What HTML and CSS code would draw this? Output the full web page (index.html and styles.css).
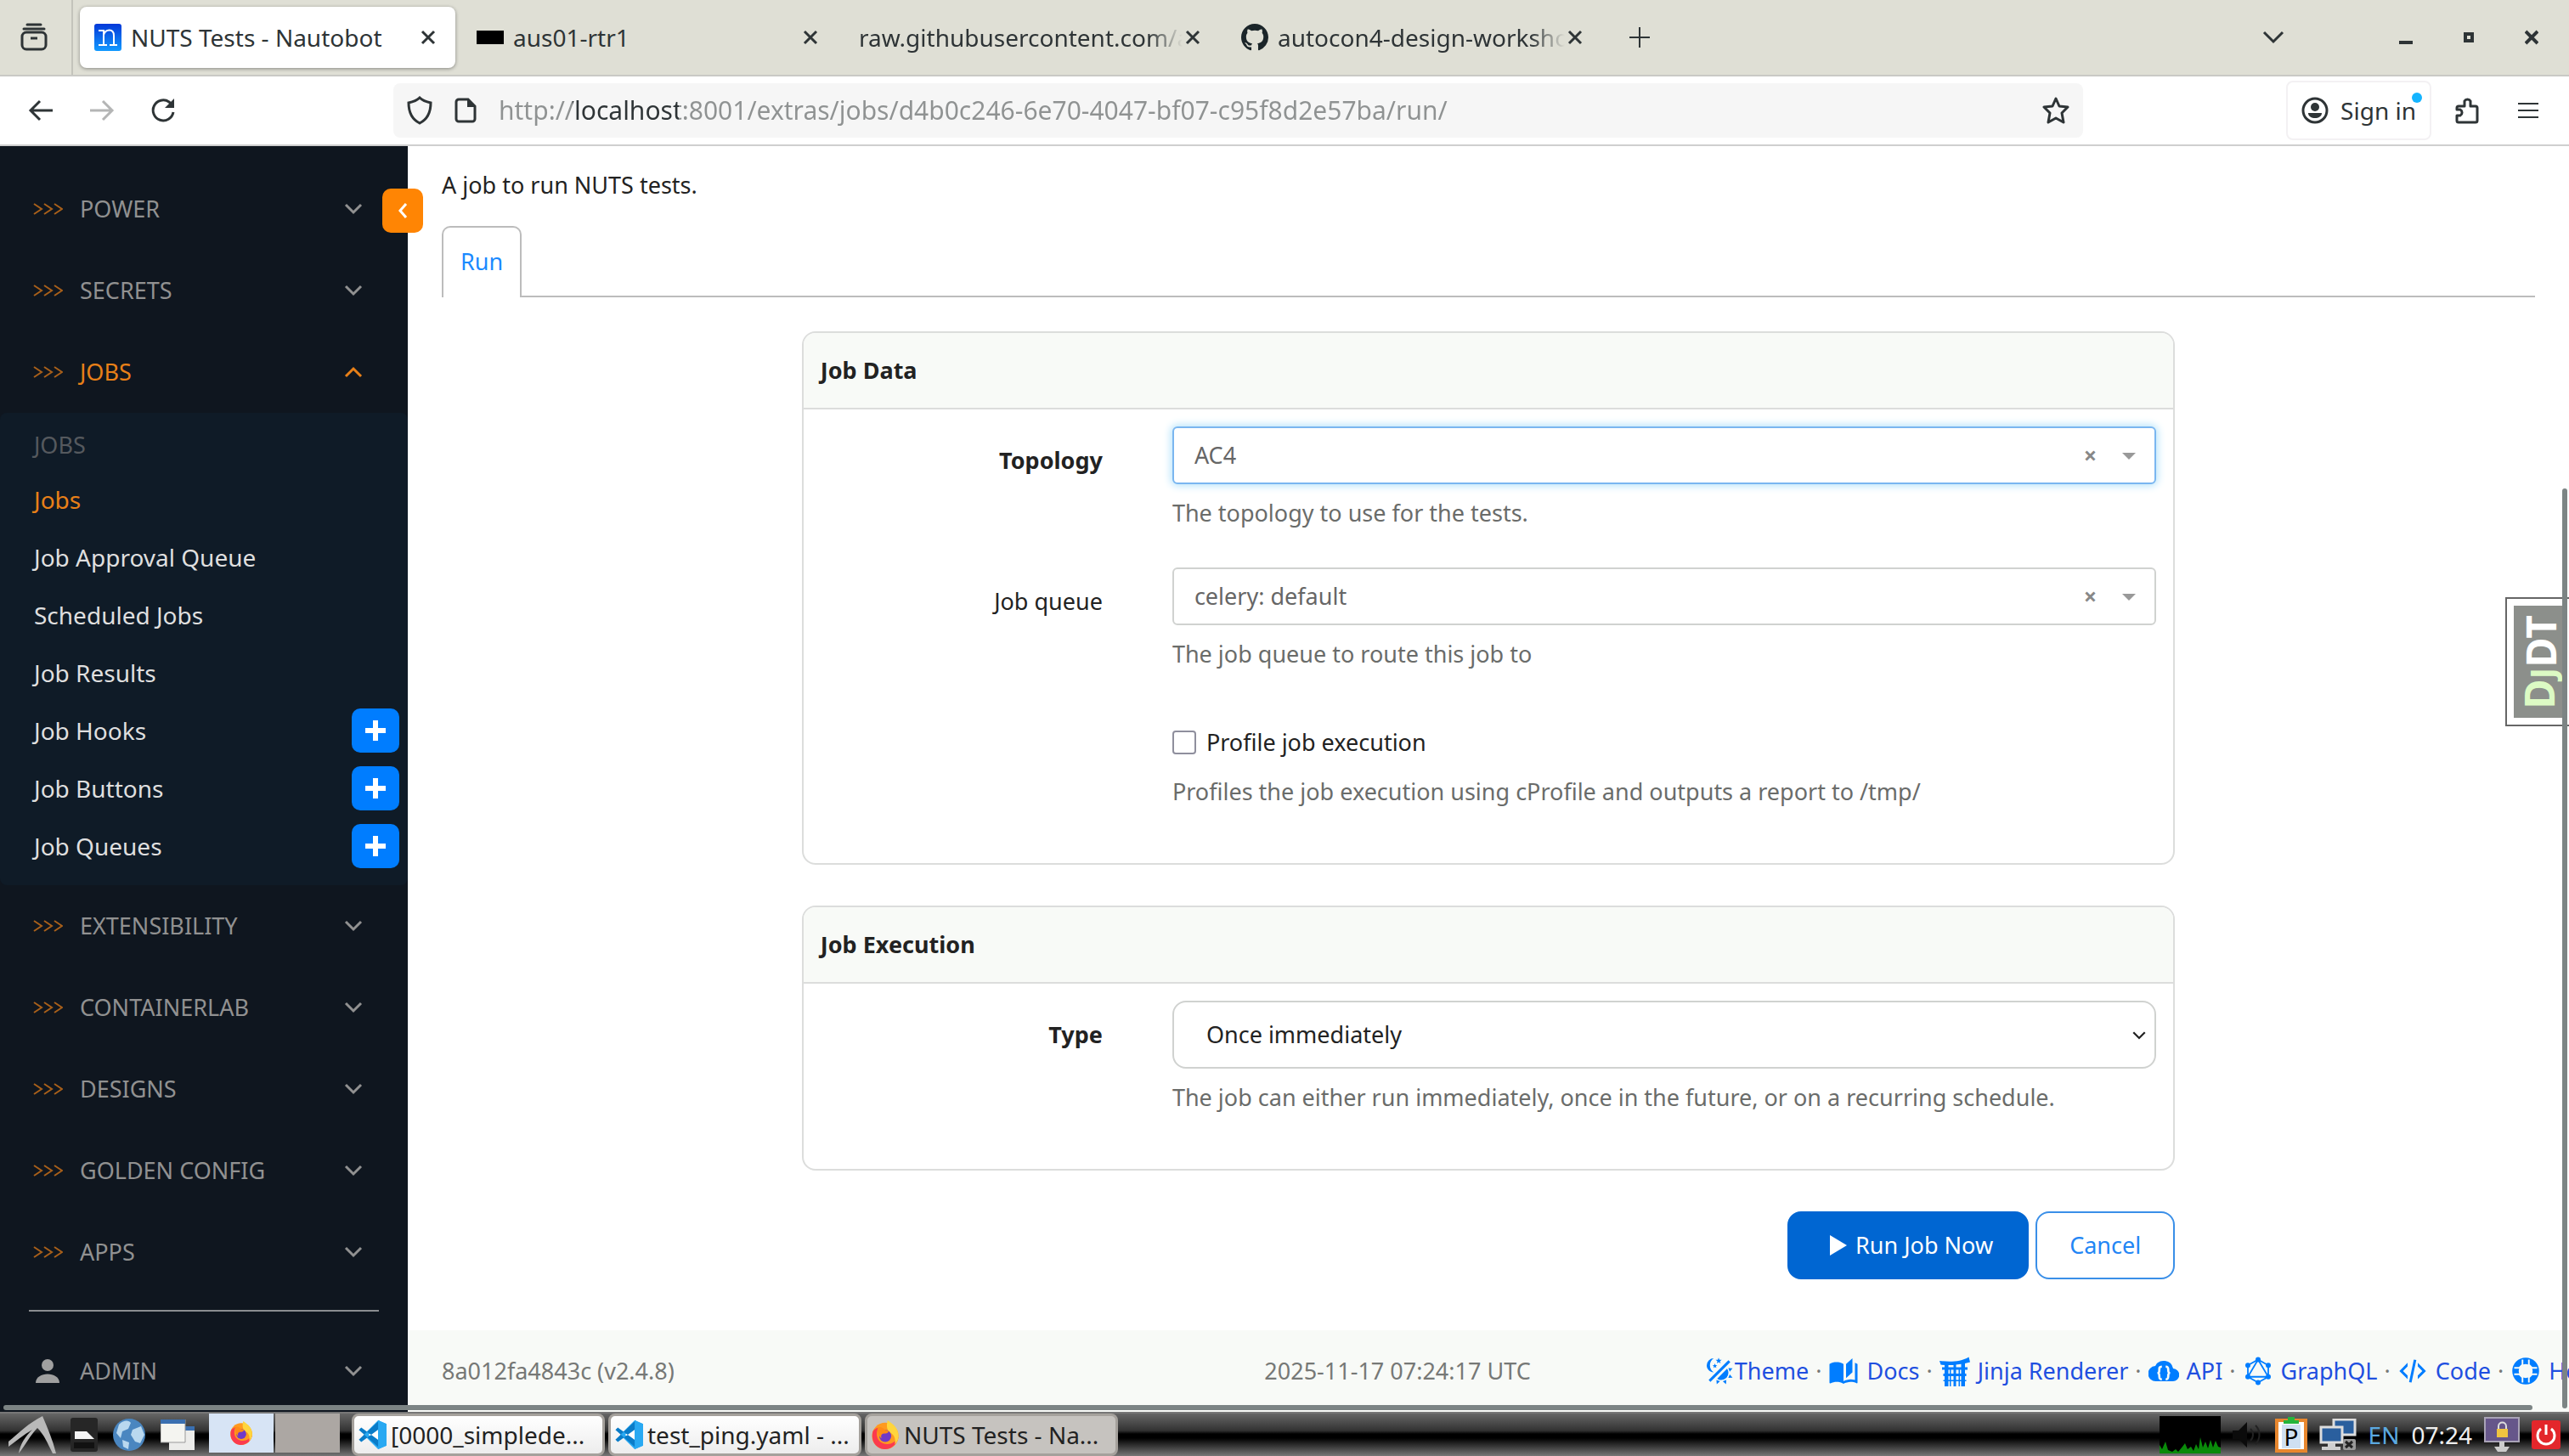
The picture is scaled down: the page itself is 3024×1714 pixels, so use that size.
FILE: index.html
```html
<!doctype html>
<html lang="en">
<head>
	<meta charset="utf-8">
	<title>NUTS Tests - Nautobot</title>
	<link rel="stylesheet" href="styles.css">
</head>

<body>
	<svg class="defs" aria-hidden="true">
		<symbol id="arrows" viewBox="0 0 36 16"><path d="M2 2l9 6-9 6M14 2l9 6-9 6M26 2l9 6-9 6" fill="none" stroke="currentColor" stroke-width="2"/></symbol>
		<symbol id="chev" viewBox="0 0 24 24"><path d="M3 7l9 9 9-9" fill="none" stroke="currentColor" stroke-width="3"/></symbol>
		<symbol id="close" viewBox="0 0 24 24"><path d="M5 5l14 14M19 5L5 19" fill="none" stroke="currentColor" stroke-width="3"/></symbol>
		<symbol id="plus" viewBox="0 0 24 24"><path d="M12 0v24M0 12h24" fill="none" stroke="currentColor" stroke-width="6"/></symbol>
		<symbol id="vscode" viewBox="0 0 24 24">
			<path d="M17 0L5 12l12 12 7-3V3z" fill="#29a9f2"/>
			<path d="M17 6v12l-8-6z" fill="#fff"/>
			<path d="M1 8l2-2 15 11v6zM1 16l2 2L18 7V0z" fill="#0a7cc8"/>
			<path d="M17 0l7 3v18l-7 3z" fill="#29a9f2"/>
		</symbol>
		<symbol id="firefox" viewBox="0 0 24 24">
			<circle cx="12" cy="13" r="11" fill="#ff9a1f"/>
			<path d="M1.500 10C0 20 7 24 12 24s10-4 11-10c-3 5-8 7-13 5S4 12 6 6C4 7 2 8 1.500 10z" fill="#fb3b4e"/>
			<path d="M14 0c4 3 9 6 9 13 0 3-1 5-3 7 1-6-1-8-4-10s-3-6-2-10z" fill="#ffd53d"/>
			<circle cx="12" cy="13" r="5" fill="#7139c8"/>
			<path d="M6 6c2-1 4 0 6 2l3 1c-1 2-3 2-4 2-2 0-3 2-2 4-2-1-4-5-3-9z" fill="#ff8b16"/>
		</symbol>
	</svg>

	<header class="browser">
		<div class="tabstrip">
			<button class="tool recent" aria-label="Recent browsing">
				<svg width="32" height="34" viewBox="0 0 32 34" fill="none" stroke="currentColor" stroke-width="3"><path d="M8 2h16M4 7h24" stroke-linecap="round"/><rect x="2" y="11" width="28" height="20" rx="5"/><path d="M12 18h8"/></svg>
			</button>
			<div class="tabs">
				<div class="tab active">
					<svg class="favicon" viewBox="0 0 32 32"><defs><linearGradient id="nb" x1="0" x2="0" y1="0" y2="1"><stop offset="0" stop-color="#0438d8"/><stop offset="1" stop-color="#129aff"/></linearGradient></defs><rect width="32" height="32" rx="3" fill="url(#nb)"/><path d="M5 8h6v16M5 25h10M11 13c2-7 12-8 12 1v11M18 25h9" fill="none" stroke="#fff" stroke-width="2"/></svg>
					<span class="tab-title">NUTS Tests - Nautobot</span>
					<button class="tab-close" aria-label="Close tab"><svg><use href="#close"/></svg></button>
				</div>
				<div class="tab">
					<svg class="favicon" viewBox="0 0 32 32"><rect y="8" width="32" height="16"/></svg>
					<span class="tab-title">aus01-rtr1</span>
					<button class="tab-close" aria-label="Close tab"><svg><use href="#close"/></svg></button>
				</div>
				<div class="tab">
					<span class="tab-title fade">raw.githubusercontent.com/a</span>
					<button class="tab-close" aria-label="Close tab"><svg><use href="#close"/></svg></button>
				</div>
				<div class="tab">
					<svg class="favicon" viewBox="0 0 16 16"><path fill="#1b2529" d="M8 0C3.580 0 0 3.580 0 8c0 3.540 2.290 6.530 5.470 7.590.4.070.55-.17.55-.38 0-.19-.01-.82-.01-1.490-2.010.37-2.530-.49-2.690-.94-.09-.23-.48-.94-.82-1.130-.28-.15-.68-.52-.01-.53.63-.01 1.080.58 1.230.82.72 1.210 1.870.87 2.330.66.07-.52.28-.87.51-1.070-1.780-.2-3.640-.89-3.640-3.950 0-.87.31-1.590.82-2.150-.08-.2-.36-1.020.08-2.120 0 0 .67-.21 2.200.82.64-.18 1.320-.27 2-.27s1.360.09 2 .27c1.530-1.040 2.200-.82 2.200-.82.44 1.100.16 1.920.08 2.120.51.56.82 1.270.82 2.150 0 3.070-1.870 3.750-3.650 3.950.29.25.54.73.54 1.480 0 1.070-.01 1.930-.01 2.200 0 .21.15.46.55.38A8.010 8.010 0 0016 8c0-4.420-3.580-8-8-8z"/></svg>
					<span class="tab-title fade">autocon4-design-worksho</span>
					<button class="tab-close" aria-label="Close tab"><svg><use href="#close"/></svg></button>
				</div>
			</div>
			<button class="tool" aria-label="New tab"><svg width="24" height="24" viewBox="0 0 24 24"><path d="M12 0v24M0 12h24" stroke="currentColor" stroke-width="2"/></svg></button>
			<div class="window-controls">
				<button class="tool list-tabs" aria-label="List all tabs"><svg width="26" height="24" viewBox="0 0 26 24"><path d="M2 6l11 11L24 6" fill="none" stroke="currentColor" stroke-width="3"/></svg></button>
				<button class="tool" aria-label="Minimize"><svg width="16" height="24" viewBox="0 0 16 24"><path d="M0 18h16" stroke="currentColor" stroke-width="4"/></svg></button>
				<button class="tool" aria-label="Maximize"><svg width="16" height="24" viewBox="0 0 16 24"><rect x="4" y="8" width="8" height="8" fill="none" stroke="currentColor" stroke-width="4"/></svg></button>
				<button class="tool" aria-label="Close window"><svg width="16" height="24" viewBox="0 0 16 24"><path d="M1 5l14 14M15 5L1 19" stroke="currentColor" stroke-width="4"/></svg></button>
			</div>
		</div>

		<div class="navbar">
			<button class="tool" aria-label="Back"><svg width="30" height="28" viewBox="0 0 30 28"><path d="M29 14H3M14 3L3 14l11 11" fill="none" stroke="currentColor" stroke-width="3"/></svg></button>
			<button class="tool" aria-label="Forward" disabled><svg width="30" height="28" viewBox="0 0 30 28"><path d="M1 14h26M16 3l11 11-11 11" fill="none" stroke="currentColor" stroke-width="3"/></svg></button>
			<button class="tool" aria-label="Reload"><svg width="30" height="30" viewBox="0 0 30 30"><path d="M27 17A12 12 0 1 1 22 5l5 5" fill="none" stroke="currentColor" stroke-width="3"/><path d="M28 1v11H17z" fill="currentColor"/></svg></button>
			<div class="urlbar">
				<svg width="30" height="34" viewBox="0 0 30 34"><path d="M15 2c4 4 8 5 13 6 0 11-3 19-13 24C5 27 2 19 2 8c5-1 9-2 13-6z" fill="none" stroke="currentColor" stroke-width="3"/></svg>
				<svg width="26" height="30" viewBox="0 0 26 30"><path d="M5 2h11l8 8v15a3 3 0 0 1-3 3H5a3 3 0 0 1-3-3V5a3 3 0 0 1 3-3z" fill="none" stroke="currentColor" stroke-width="3"/><path d="M15 1v10h10z" fill="currentColor"/></svg>
				<input class="url" type="text" aria-label="Address" value="http://localhost:8001/extras/jobs/d4b0c246-6e70-4047-bf07-c95f8d2e57ba/run/">
				<button class="tool" aria-label="Bookmark this page"><svg width="32" height="32" viewBox="0 0 32 32"><path d="M16 2l4 9 10 1-7 7 2 11-9-5-9 5 2-11-7-7 10-1z" fill="none" stroke="currentColor" stroke-width="3" stroke-linejoin="round"/></svg></button>
			</div>
			<button class="signin">
				<svg width="32" height="32" viewBox="0 0 32 32"><circle cx="16" cy="16" r="14" fill="none" stroke="currentColor" stroke-width="3"/><circle cx="16" cy="12" r="5" fill="currentColor"/><path d="M8 19h16c0 8-16 8-16 0z" fill="currentColor"/></svg>
				Sign in
				<span class="dot"></span>
			</button>
			<button class="tool" aria-label="Extensions"><svg width="28" height="34" viewBox="0 0 28 34"><path d="M2 14a2 2 0 0 1 2-2h7V6a4 4 0 0 1 7 0v6h6a2 2 0 0 1 2 2v15a2 2 0 0 1-2 2H4a2 2 0 0 1-2-2v-6h4a4 4 0 0 0 0-7H2z" fill="none" stroke="currentColor" stroke-width="3" stroke-linejoin="round"/></svg></button>
			<button class="tool" aria-label="Menu"><svg width="24" height="22" viewBox="0 0 24 22"><path d="M0 3h24M0 11h24M0 19h24" stroke="currentColor" stroke-width="2"/></svg></button>
		</div>
	</header>

	<div class="page">
		<nav class="sidebar">
			<button class="menu"><svg class="arrows"><use href="#arrows"/></svg>POWER<svg class="chev"><use href="#chev"/></svg></button>
			<button class="menu"><svg class="arrows"><use href="#arrows"/></svg>SECRETS<svg class="chev"><use href="#chev"/></svg></button>
			<button class="menu open"><svg class="arrows"><use href="#arrows"/></svg>JOBS<svg class="chev"><use href="#chev"/></svg></button>
			<div class="submenu">
				<div class="submenu-title">JOBS</div>
				<div class="submenu-item"><a class="current" href="#">Jobs</a></div>
				<div class="submenu-item"><a href="#">Job Approval Queue</a></div>
				<div class="submenu-item"><a href="#">Scheduled Jobs</a></div>
				<div class="submenu-item"><a href="#">Job Results</a></div>
				<div class="submenu-item"><a href="#">Job Hooks</a><button class="add" aria-label="Add job hook"><svg><use href="#plus"/></svg></button></div>
				<div class="submenu-item"><a href="#">Job Buttons</a><button class="add" aria-label="Add job button"><svg><use href="#plus"/></svg></button></div>
				<div class="submenu-item"><a href="#">Job Queues</a><button class="add" aria-label="Add job queue"><svg><use href="#plus"/></svg></button></div>
			</div>
			<button class="menu"><svg class="arrows"><use href="#arrows"/></svg>EXTENSIBILITY<svg class="chev"><use href="#chev"/></svg></button>
			<button class="menu"><svg class="arrows"><use href="#arrows"/></svg>CONTAINERLAB<svg class="chev"><use href="#chev"/></svg></button>
			<button class="menu"><svg class="arrows"><use href="#arrows"/></svg>DESIGNS<svg class="chev"><use href="#chev"/></svg></button>
			<button class="menu"><svg class="arrows"><use href="#arrows"/></svg>GOLDEN CONFIG<svg class="chev"><use href="#chev"/></svg></button>
			<button class="menu"><svg class="arrows"><use href="#arrows"/></svg>APPS<svg class="chev"><use href="#chev"/></svg></button>
			<hr>
			<button class="menu"><svg class="user" viewBox="0 0 36 28"><circle cx="18" cy="7" r="7" fill="currentColor"/><path d="M4 28c0-14 28-14 28 0z" fill="currentColor"/></svg>ADMIN<svg class="chev"><use href="#chev"/></svg></button>
		</nav>
		<button class="collapse" aria-label="Collapse sidebar"><svg width="12" height="20" viewBox="0 0 12 20"><path d="M10 2l-7 8 7 8" fill="none" stroke="#fff" stroke-width="3"/></svg></button>

		<div class="content">
			<main>
				<p class="description">A job to run NUTS tests.</p>
				<div class="page-tabs"><a href="#">Run</a></div>

				<form class="job-form">
					<section class="card">
						<h2>Job Data</h2>
						<div class="card-body">
							<label class="required" for="topology">Topology</label>
							<div class="field">
								<div class="select focus">
									<select id="topology"><option>AC4</option></select>
									<button type="button" class="clear" aria-label="Clear topology">×</button>
									<span class="caret"></span>
								</div>
								<p class="help">The topology to use for the tests.</p>
							</div>
							<label for="queue">Job queue</label>
							<div class="field">
								<div class="select">
									<select id="queue"><option>celery: default</option></select>
									<button type="button" class="clear" aria-label="Clear job queue">×</button>
									<span class="caret"></span>
								</div>
								<p class="help">The job queue to route this job to</p>
							</div>
							<div class="field check">
								<label for="profile"><input type="checkbox" id="profile">Profile job execution</label>
								<p class="help">Profiles the job execution using cProfile and outputs a report to /tmp/</p>
							</div>
						</div>
					</section>

					<section class="card">
						<h2>Job Execution</h2>
						<div class="card-body">
							<label class="required" for="type">Type</label>
							<div class="field">
								<div class="select native">
									<select id="type"><option>Once immediately</option></select>
									<svg class="select-chev"><use href="#chev"/></svg>
								</div>
								<p class="help">The job can either run immediately, once in the future, or on a recurring schedule.</p>
							</div>
						</div>
					</section>

					<div class="actions">
						<button type="button" class="btn primary"><svg width="20" height="24" viewBox="0 0 20 24"><path d="M0 0l20 12L0 24z" fill="#fff"/></svg>Run Job Now</button>
						<button type="button" class="btn">Cancel</button>
					</div>
				</form>
			</main>

			<footer>
				<span>8a012fa4843c (v2.4.8)</span>
				<span>2025-11-17 07:24:17 UTC</span>
				<div class="links">
					<a class="tight" href="#"><svg viewBox="0 0 24 24"><path d="M7.500 2C5.710 3.150 4.500 5.180 4.500 7.500s1.210 4.350 3.030 5.500C4.460 13 2 10.540 2 7.500A5.500 5.500 0 0 1 7.500 2m11.570 1.500l1.430 1.430L4.930 20.500 3.500 19.070 19.070 3.500m-6.180 2.430L11.410 5 9.970 6l.42-1.700L9 3.240l1.750-.12.580-1.650L12 3.100l1.730.03-1.350 1.130.51 1.670m-3.300 3.610l-1.160-.73-1.120.78.34-1.320-1.090-.83 1.360-.09.45-1.290.51 1.270 1.360.03-1.050.87.40 1.310M19 13.500a5.500 5.500 0 0 1-5.500 5.500c-1.220 0-2.350-.4-3.260-1.070l7.690-7.690c.67.91 1.070 2.040 1.070 3.260m-4.400 6.580l2.770-1.150-.24 3.350-2.530-2.200m4.330-2.700l1.150-2.770 2.200 2.540-3.350.23m1.150-4.960l-1.140-2.780 3.340.24-2.200 2.540M9.630 18.930l2.770 1.150-2.530 2.190-.24-3.340z"/></svg>Theme</a> ·
					<a href="#"><svg viewBox="0 0 24 24"><path d="M19 2L14 6.500V17.500L19 13V2M6.500 5C4.550 5 2.450 5.400 1 6.500V21.160C1 21.410 1.250 21.660 1.500 21.660C1.600 21.660 1.650 21.590 1.750 21.590C3.100 20.940 5.050 20.500 6.500 20.500C8.450 20.500 10.550 20.900 12 22C13.350 21.150 15.800 20.500 17.500 20.500C19.150 20.500 20.850 20.810 22.250 21.560C22.350 21.610 22.400 21.590 22.500 21.590C22.750 21.590 23 21.340 23 21.090V6.500C22.400 6.050 21.750 5.750 21 5.500V19C19.900 18.650 18.700 18.500 17.500 18.500C15.800 18.500 13.350 19.150 12 20V6.500C10.550 5.400 8.450 5 6.500 5Z"/></svg>Docs</a> ·
					<a href="#"><svg viewBox="0 0 24 24"><path d="M0 4c8 1 16 1 23-3l1 4c-7 2-16 3-23 2zM2 9h20v2H2zM4 6h3v18H4zM17 6h3v18h-3zM11 5h2v19h-2zM3 14h18v2H3zM3 19h18v1H3zM8 11h1v13H8zM15 11h1v13h-1z"/></svg>Jinja Renderer</a> ·
					<a href="#"><svg viewBox="0 0 24 24"><path d="M19.350 10A7.500 7.500 0 0 0 5.350 8 6 6 0 0 0 6 20h13a5 5 0 0 0 .35-10z"/><path d="M10.500 8.500c-2 0-2 1-2 2.500s0 2.500-1.500 2.500c1.500 0 1.500 1 1.500 2.500s0 2.500 2 2.500M13.500 8.500c2 0 2 1 2 2.500s0 2.500 1.500 2.500c-1.500 0-1.500 1-1.500 2.500s0 2.500-2 2.500" fill="none" stroke="#f8faf7" stroke-width="1.800"/></svg>API</a> ·
					<a href="#"><svg viewBox="0 0 24 24"><path d="M12 3l8 4.500v9L12 21l-8-4.500v-9zM12 3l8 13.500H4z" fill="none" stroke="currentColor" stroke-width="1.200"/><circle cx="12" cy="3" r="2"/><circle cx="20" cy="7.500" r="2"/><circle cx="20" cy="16.500" r="2"/><circle cx="12" cy="21" r="2"/><circle cx="4" cy="16.500" r="2"/><circle cx="4" cy="7.500" r="2"/></svg>GraphQL</a> ·
					<a href="#"><svg viewBox="0 0 24 24"><path d="M12.890 3L14.850 3.400L11.110 21L9.150 20.600L12.890 3M19.590 12L16 8.410V5.580L22.420 12L16 18.410V15.580L19.590 12M1.580 12L8 5.580V8.410L4.410 12L8 15.580V18.410L1.580 12Z"/></svg>Code</a> ·
					<a href="#"><svg viewBox="0 0 24 24"><circle cx="12" cy="12" r="8" fill="none" stroke="currentColor" stroke-width="5"/><path d="M9.500 3v4L7 9.500H3M14.500 3v4L17 9.500h4M9.500 21v-4L7 14.500H3M14.500 21v-4l2.500-2.500h4" fill="none" stroke="#f8faf7" stroke-width="1.300"/></svg>Help</a>
				</div>
			</footer>
		</div>

		<a class="djdt" href="#"><span class="djdt-text"><span class="dj">D<small>J</small></span>DT</span></a>
		<div class="scroll-v"></div>
		<div class="scroll-h"></div>
	</div>

	<div class="taskbar">
		<button class="launcher" aria-label="Start menu"><svg width="56" height="44" viewBox="0 0 56 44"><path d="M0 30C12 20 24 8 40 0c6 14 12 28 16 44h-4C46 32 42 22 34 14 26 22 20 34 12 44 14 32 20 24 28 16 18 22 8 30 0 36z" fill="#b9b9b9"/></svg></button>
		<button class="launcher" aria-label="File manager"><svg width="32" height="40" viewBox="0 0 32 40"><rect width="32" height="40" rx="3" fill="#262626"/><path d="M5 16h14l9 9H5z" fill="#f4f4f4"/><path d="M4 29h24v7H4z" fill="#111"/></svg></button>
		<button class="launcher" aria-label="Web browser"><svg width="40" height="40" viewBox="0 0 40 40"><circle cx="20" cy="20" r="19" fill="#4a86c0"/><path d="M8 8c6-6 12-5 14-2l-3 7-7 3-2 8-5-6zM24 14l10-4 4 10-5 10-6-2-5-8zM12 26l8 3-1 8-6-3z" fill="#b9d8ef"/></svg></button>
		<button class="launcher" aria-label="Show desktop"><svg width="40" height="36" viewBox="0 0 40 36"><path d="M10 8h30v28H10z" fill="#ececea"/><path d="M10 8h30v5H10z" fill="#3a6fb0"/><path d="M0 0h29v27H0z" fill="#f4f4f0" stroke="#999" stroke-width="1"/><path d="M0 0h29v5H0z" fill="#3a6fb0"/></svg></button>
		<div class="pager">
			<button class="desk on" aria-label="Desktop 1"><svg width="28" height="28"><use href="#firefox"/></svg></button>
			<button class="desk" aria-label="Desktop 2"></button>
		</div>
		<div class="windows">
			<button class="window"><svg width="34" height="36"><use href="#vscode"/></svg>[0000_simplede...</button>
			<button class="window"><svg width="34" height="36"><use href="#vscode"/></svg>test_ping.yaml - ...</button>
			<button class="window on"><svg width="34" height="36"><use href="#firefox"/></svg>NUTS Tests - Na...</button>
		</div>
		<div class="tray">
			<svg width="72" height="44" viewBox="0 0 72 44"><path d="M0 0h72v44H0z"/><path d="M0 44V34l3 5 4-9 3 10 5 2 4-3 3 3 5-6 3-4 3 7 4-3 3 5 3-8 3 6 2-14 3 12 3-7 3 8 3-10 3 9 3-8 3 7 3 1v7z" fill="#0a8a0a"/></svg>
			<svg width="36" height="30" viewBox="0 0 36 30"><path d="M0 10h7L17 0v30L7 20H0z" fill="#0b0b0b"/><path d="M21 8c4 4 4 10 0 14M27 4c6 6 6 16 0 22" fill="none" stroke="#222" stroke-width="2"/></svg>
			<svg class="clip" width="38" height="42" viewBox="0 0 38 42"><rect x="2" y="4" width="34" height="36" fill="#fff" stroke="#e8872e" stroke-width="4"/><path d="M8 9h22v28H8z" fill="#cfe0f2"/><path d="M10 8V4h5V0h8v4h5v4z" fill="#25b53c"/><text x="19" y="34" text-anchor="middle">P</text></svg>
			<svg width="44" height="38" viewBox="0 0 44 38"><rect x="17" y="1" width="25" height="18" fill="#2a5f9e" stroke="#ddd" stroke-width="3"/><rect x="2" y="10" width="25" height="18" fill="#2a5f9e" stroke="#ddd" stroke-width="3"/><path d="M10 29h9v4h6v4H3v-4h7z" fill="#cfcfcf"/><rect x="28" y="24" width="15" height="13" rx="2" fill="#999"/><path d="M31 27l8 7M39 27l-8 7" stroke="#222" stroke-width="3"/></svg>
			<span class="lang">EN</span>
			<span class="clock">07:24</span>
			<svg width="42" height="42" viewBox="0 0 42 42"><rect x="1" y="1" width="40" height="28" fill="#66568a" stroke="#a9a3b6" stroke-width="2"/><rect x="15" y="14" width="13" height="10" fill="#f0c440"/><path d="M17 14v-3c0-6 9-6 9 0v3" fill="none" stroke="#ddd" stroke-width="2"/><path d="M18 29h6v6h6l-4 6H16l-4-6h6z" fill="#ccc"/></svg>
			<svg width="34" height="34" viewBox="0 0 34 34"><rect width="34" height="34" rx="3" fill="#e3262b"/><path d="M11 10a10 10 0 1 0 12 0M17 5v12" fill="none" stroke="#fff" stroke-width="3"/></svg>
		</div>
	</div>
</body>
</html>
```
FILE: styles.css
```css
* {
	box-sizing: border-box;
}
body {
	margin: 0;
	height: 100vh;
	display: flex;
	flex-direction: column;
	overflow: hidden;
	background: #fff;
	color: #222;
	font-family: "Noto Sans", "Open Sans", sans-serif;
	font-size: 27px;
	line-height: 40px;
}
button, input, select {
	font: inherit;
	color: inherit;
}
button {
	margin: 0;
	padding: 0;
	border: 0;
	background: none;
	cursor: pointer;
}
a {
	text-decoration: none;
}
svg {
	flex: none;
	display: block;
}
.defs {
	position: absolute;
	width: 0;
	height: 0;
}

/* browser chrome */
.browser {
	flex: none;
	color: #2e3436;
	font-size: 28px;
}
.tabstrip {
	display: flex;
	align-items: center;
	height: 90px;
	background: #dfdfd5;
	border-bottom: 2px solid #c9c9c5;
}
.tool {
	display: flex;
	align-items: center;
	justify-content: center;
	flex: none;
	width: 72px;
	height: 64px;
}
.tool[disabled] {
	color: #b4b5b5;
}
.recent {
	width: 86px;
	height: 100%;
	padding-right: 4px;
	border-right: 2px solid #c3c3bb;
}
.tabs {
	display: flex;
	gap: 8px;
	padding: 0 8px;
}
.tab {
	display: flex;
	align-items: center;
	width: 442px;
	height: 72px;
	padding: 0 20px 0 17px;
	border-radius: 8px;
}
.tab.active {
	background: #fff;
	box-shadow: 0 1px 4px rgba(0, 0, 0, .4);
}
.favicon {
	width: 32px;
	height: 32px;
	margin-right: 11px;
}
.tab-title {
	flex: 1;
	min-width: 0;
	overflow: hidden;
	white-space: nowrap;
}
.fade {
	-webkit-mask-image: linear-gradient(to left, transparent, #000 40px);
	mask-image: linear-gradient(to left, transparent, #000 40px);
}
.tab-close svg {
	width: 24px;
	height: 24px;
}
.window-controls {
	display: flex;
	margin-left: auto;
	padding-right: 7px;
}
.window-controls .tool {
	width: 74px;
}
.window-controls .list-tabs {
	margin-right: 82px;
}
.navbar {
	display: flex;
	align-items: center;
	height: 82px;
	padding: 0 12px;
	border-bottom: 2px solid #cfcfcf;
	background: #fff;
}
.urlbar {
	display: flex;
	align-items: center;
	flex: 1;
	height: 64px;
	margin: 0 239px 0 235px;
	padding-left: 16px;
	gap: 26px;
	border-radius: 8px;
	background: #f6f6f6;
}
/* the host is darker than the rest of the address */
.url {
	flex: 1;
	min-width: 0;
	padding: 0;
	border: 0;
	outline: 0;
	color: #8f9292;
	background: linear-gradient(to right, #8f9292 87px, #2e3436 87px 212px, #8f9292 212px);
	-webkit-background-clip: text;
	background-clip: text;
	-webkit-text-fill-color: transparent;
	font-size: 30px;
}
.urlbar .tool {
	width: 64px;
}
.signin {
	position: relative;
	display: flex;
	align-items: center;
	gap: 14px;
	height: 70px;
	padding: 0 16px;
	margin-right: 6px;
	border: 2px solid #f3f1f3;
	border-radius: 8px;
}
.dot {
	position: absolute;
	top: 12px;
	right: 9px;
	width: 12px;
	height: 12px;
	border-radius: 50%;
	background: #14b4ff;
}

/* page */
.page {
	position: relative;
	display: flex;
	flex: 1;
	min-height: 0;
	overflow: hidden;
}
.sidebar {
	flex: none;
	width: 480px;
	padding-top: 26px;
	overflow: hidden;
	background: #0f161f;
	color: #919191;
}
.menu {
	display: flex;
	align-items: center;
	width: 100%;
	height: 96px;
	padding: 0 52px 0 38px;
	text-align: left;
}
.arrows, .user {
	width: 36px;
	height: 16px;
	margin-right: 20px;
	color: #a9601a;
}
.user {
	height: 28px;
	color: #a0a0a0;
}
.chev {
	width: 24px;
	height: 24px;
	margin-left: auto;
}
.open {
	color: #e88018;
}
.open .chev {
	transform: rotate(180deg);
}
.submenu {
	padding: 8px 10px 12px 40px;
	border-radius: 8px;
	background: #0f1b27;
	font-size: 28px;
}
.submenu-title {
	padding: 10px 0;
	color: #55595e;
	font-size: 27px;
}
.submenu-item {
	display: flex;
	align-items: center;
	justify-content: space-between;
	height: 68px;
}
.submenu-item a {
	color: #dfdfdf;
}
.submenu-item .current {
	color: #e88018;
}
.add {
	display: flex;
	align-items: center;
	justify-content: center;
	width: 56px;
	height: 52px;
	border-radius: 10px;
	background: #007dff;
	color: #fff;
}
.add svg {
	width: 24px;
	height: 24px;
}
.sidebar hr {
	height: 2px;
	margin: 20px 34px 22px;
	border: 0;
	background: #8a8d90;
}
.collapse {
	position: absolute;
	top: 50px;
	left: 450px;
	display: flex;
	align-items: center;
	justify-content: center;
	width: 48px;
	height: 52px;
	border-radius: 10px;
	background: #ff8504;
}
.content {
	display: flex;
	flex-direction: column;
	flex: 1;
	min-width: 0;
}
main {
	padding: 26px 40px 0;
}
.description {
	margin: 0 0 28px;
}
.page-tabs {
	border-bottom: 2px solid #bcbcbc;
}
.page-tabs a {
	display: inline-block;
	margin-bottom: -2px;
	padding: 20px 20px 22px;
	border: 2px solid #bcbcbc;
	border-bottom: 0;
	border-radius: 10px 10px 0 0;
	background: #fff;
	color: #1a8aff;
	vertical-align: top;
}
.job-form {
	width: 65.6%;
	margin: 40px auto 0;
}
.card {
	margin-bottom: 48px;
	border: 2px solid #dcdddc;
	border-radius: 16px;
	overflow: hidden;
}
.card h2 {
	margin: 0;
	padding: 24px 20px;
	border-bottom: 2px solid #dcdddc;
	background: #f8faf7;
	font-size: 27px;
	line-height: 40px;
}
.card-body {
	display: grid;
	grid-template-columns: 1fr 3fr;
	column-gap: 28px;
	padding: 20px;
}
.card-body > label {
	padding: 20px 54px 0 0;
	text-align: right;
}
.card-body > .required {
	font-weight: bold;
}
.field {
	margin-bottom: 44px;
}
.check {
	grid-column: 2;
	padding-top: 20px;
}
.check label {
	display: flex;
	align-items: center;
	margin-bottom: 18px;
}
.check input {
	appearance: none;
	width: 28px;
	height: 28px;
	margin: 0 12px 0 0;
	border: 2px solid #8f8f9d;
	border-radius: 4px;
	background: #fff;
}
.help {
	margin: 14px 0 0;
	color: #6a6c6a;
}
.select {
	position: relative;
}
.select select {
	appearance: none;
	display: block;
	width: 100%;
	height: 68px;
	padding: 0 120px 0 24px;
	border: 2px solid #d0d2d0;
	border-radius: 6px;
	background: #fff;
	color: #666;
}
.focus select {
	border-color: #7ab6f0;
	box-shadow: 0 0 10px 2px #b8e4fb;
}
.select.native select {
	height: 80px;
	padding-left: 38px;
	border-radius: 16px;
	color: #222;
}
.clear {
	position: absolute;
	top: 14px;
	right: 70px;
	color: #888;
	font-weight: bold;
}
.caret {
	position: absolute;
	top: 31px;
	right: 24px;
	border: 8px solid transparent;
	border-top-color: #999;
	border-bottom: 0;
}
.select-chev {
	position: absolute;
	top: 32px;
	right: 11px;
	width: 18px;
	height: 18px;
	color: #222;
}
.actions {
	display: flex;
	justify-content: flex-end;
	gap: 8px;
}
.btn {
	display: flex;
	align-items: center;
	gap: 10px;
	height: 80px;
	padding: 0 38px;
	border: 2px solid #3a8fe8;
	border-radius: 16px;
	color: #2386f5;
}
.btn.primary {
	padding: 0 40px 0 48px;
	border-color: #0066d2;
	background: #0066d2;
	color: #fff;
}
footer {
	display: grid;
	grid-template-columns: 39.3% 21% minmax(0, 1fr);
	align-items: center;
	height: 96px;
	margin-top: auto;
	padding: 0 40px;
	background: #f8faf7;
	color: #767876;
	white-space: nowrap;
}
.links {
	display: flex;
	gap: 8px;
}
.links a {
	display: flex;
	align-items: center;
	gap: 9px;
	color: #1f4fe0;
}
.links .tight {
	gap: 0;
}
.links svg {
	width: 36px;
	height: 36px;
	color: #007dff;
	fill: #007dff;
}
.djdt {
	position: absolute;
	top: 531px;
	right: 0;
	width: 75px;
	height: 152px;
	padding: 8px 0 8px 8px;
	border: 2px solid #666;
	border-right: 0;
	background: #fff;
}
.djdt-text {
	display: flex;
	align-items: center;
	justify-content: center;
	height: 100%;
	background: #8c8f8b;
	color: #fff;
	font-size: 48px;
	font-weight: bold;
	line-height: 60px;
	writing-mode: sideways-lr;
}
.djdt small {
	font-size: 40px;
}
.dj {
	color: #dcfac4;
}
.scroll-v {
	position: absolute;
	top: 403px;
	right: 2px;
	bottom: 4px;
	width: 6px;
	border-radius: 3px;
	background: #7c8484;
}
.scroll-h {
	position: absolute;
	left: 4px;
	right: 43px;
	bottom: 2px;
	height: 6px;
	border-radius: 3px;
	background: #7c8484;
}

/* desktop panel */
.taskbar {
	display: flex;
	align-items: center;
	flex: none;
	height: 52px;
	padding: 0 10px;
	border-top: 2px solid #777;
	background: linear-gradient(#666, #333 40%, #000 48%, #000 58%, #777);
	color: #222;
	font-size: 28px;
}
.launcher {
	margin-right: 17px;
}
.pager {
	display: flex;
	gap: 2px;
	align-self: stretch;
	margin-right: 14px;
	padding-bottom: 4px;
}
.desk {
	display: flex;
	align-items: center;
	justify-content: center;
	width: 76px;
	background: #aca7a3;
}
.desk.on {
	background: #d7e4f5;
}
.windows {
	display: flex;
	gap: 4px;
	align-self: stretch;
}
.window {
	display: flex;
	align-items: center;
	gap: 5px;
	width: 298px;
	padding-left: 4px;
	border: 3px solid #a5a19c;
	border-radius: 8px;
	background: linear-gradient(#fff, #ededed);
	white-space: nowrap;
}
.window.on {
	background: #c6c3bf;
}
.tray {
	display: flex;
	align-items: center;
	gap: 14px;
	margin-left: auto;
	color: #eee;
}
.clip text {
	font-size: 28px;
}
.lang {
	color: #5ba9e0;
}
```
